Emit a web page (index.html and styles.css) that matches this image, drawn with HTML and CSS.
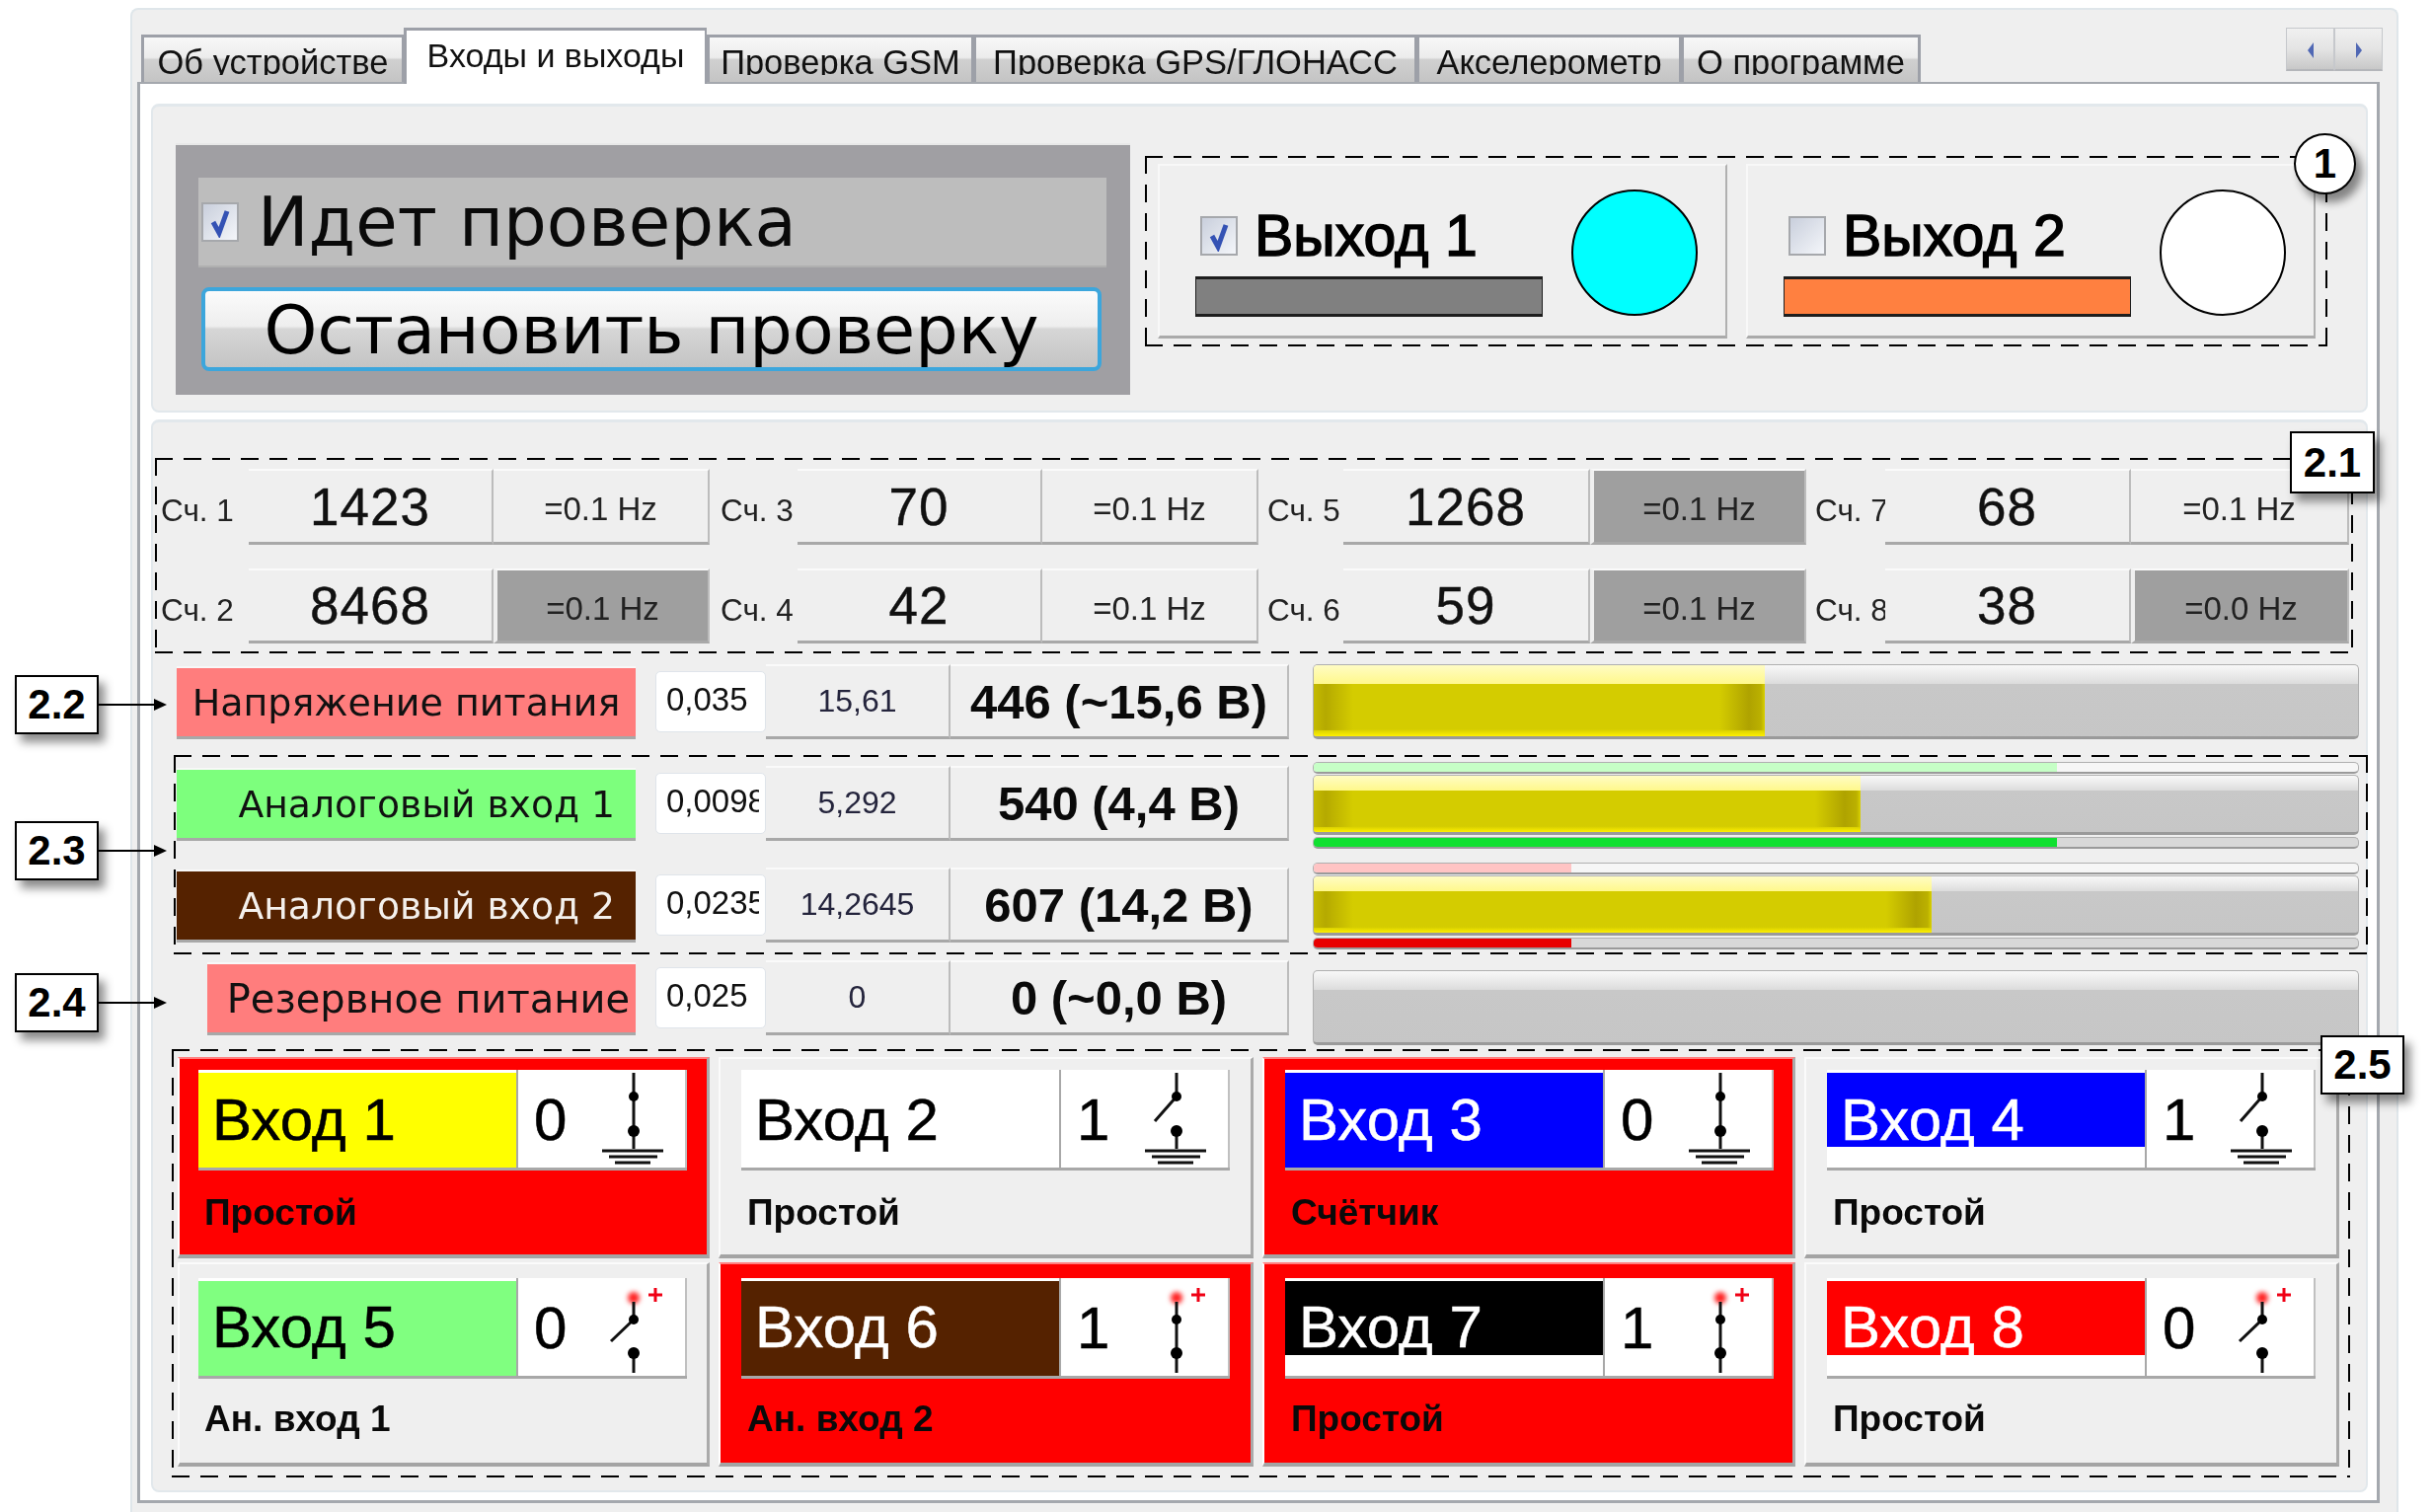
FILE: index.html
```html
<!DOCTYPE html>
<html lang="ru">
<head>
<meta charset="utf-8">
<title>Входы и выходы</title>
<link rel="stylesheet" href="styles.css">
</head>
<body>
<div class="window">
  <div class="tabs">
    <div class="tab t1"><span>Об устройстве</span></div>
    <div class="tab active t2"><span>Входы и выходы</span></div>
    <div class="tab t3"><span>Проверка GSM</span></div>
    <div class="tab t4"><span>Проверка GPS/ГЛОНАСС</span></div>
    <div class="tab t5"><span>Акселерометр</span></div>
    <div class="tab t6"><span>О программе</span></div>
    <div class="scroll">
      <div class="sbtn"><svg width="8" height="16" viewBox="0 0 8 16"><path d="M7 0V16L1 8Z" fill="#5068b4"/></svg></div>
      <div class="sbtn"><svg width="8" height="16" viewBox="0 0 8 16"><path d="M1 0V16L7 8Z" fill="#5068b4"/></svg></div>
    </div>
  </div>
  <div class="pane">
    <section class="panel top">
      <div class="status">
        <div class="status-label">
          <span class="check"><svg width="26" height="32" viewBox="0 0 26 32"><path d="M6 16L12 27L20 5" fill="none" stroke="#3452b4" stroke-width="5"/></svg></span>
          <span class="status-text">Идет проверка</span>
        </div>
        <button class="stop">Остановить проверку</button>
      </div>
      <div class="out first">
        <div class="out-left">
          <div class="out-row">
            <span class="check"><svg width="26" height="32" viewBox="0 0 26 32"><path d="M6 16L12 27L20 5" fill="none" stroke="#3452b4" stroke-width="5"/></svg></span>
            <span class="out-text">Выход 1</span>
          </div>
          <div class="out-bar gray"></div>
        </div>
        <div class="lamp cyan"></div>
      </div>
      <div class="out">
        <div class="out-left">
          <div class="out-row">
            <span class="check"></span>
            <span class="out-text">Выход 2</span>
          </div>
          <div class="out-bar orange"></div>
        </div>
        <div class="lamp white"></div>
      </div>
    </section>

    <section class="panel main">
      <div class="counters">
        <div class="cl">Сч. 1</div><div class="cb num">1423</div><div class="cb hz">=0.1 Hz</div>
        <div class="cl g2">Сч. 3</div><div class="cb num">70</div><div class="cb hz">=0.1 Hz</div>
        <div class="cl g3">Сч. 5</div><div class="cb num">1268</div><div class="cb hz on">=0.1 Hz</div>
        <div class="cl g3">Сч. 7</div><div class="cb num">68</div><div class="cb hz">=0.1 Hz</div>
        <div class="cl">Сч. 2</div><div class="cb num">8468</div><div class="cb hz on">=0.1 Hz</div>
        <div class="cl g2">Сч. 4</div><div class="cb num">42</div><div class="cb hz">=0.1 Hz</div>
        <div class="cl g3">Сч. 6</div><div class="cb num">59</div><div class="cb hz on">=0.1 Hz</div>
        <div class="cl g3">Сч. 8</div><div class="cb num">38</div><div class="cb hz on">=0.0 Hz</div>
      </div>

      <div class="arow r22">
        <div class="cells">
          <div class="alabel salmon center">Напряжение питания</div>
          <div class="ainput"><span>0,035</span></div>
          <div class="aval">15,61</div>
          <div class="abig">446 (~15,6 В)</div>
        </div>
        <div class="bars">
          <div class="track big"><div class="fill" style="width:457px"></div></div>
        </div>
      </div>

      <div class="arow r23a">
        <div class="cells">
          <div class="alabel green">Аналоговый вход 1</div>
          <div class="ainput"><span>0,0098</span></div>
          <div class="aval">5,292</div>
          <div class="abig">540 (4,4 В)</div>
        </div>
        <div class="bars">
          <div class="track thin light"><div class="tfill lgreen" style="width:753px"></div></div>
          <div class="track mid"><div class="fill" style="width:554px"></div></div>
          <div class="track thin dark"><div class="tfill dgreen" style="width:753px"></div></div>
        </div>
      </div>

      <div class="arow r23b">
        <div class="cells">
          <div class="alabel brown">Аналоговый вход 2</div>
          <div class="ainput"><span>0,0235</span></div>
          <div class="aval">14,2645</div>
          <div class="abig">607 (14,2 В)</div>
        </div>
        <div class="bars">
          <div class="track thin light"><div class="tfill lred" style="width:261px"></div></div>
          <div class="track mid"><div class="fill" style="width:626px"></div></div>
          <div class="track thin dark"><div class="tfill dred" style="width:261px"></div></div>
        </div>
      </div>

      <div class="arow r24">
        <div class="cells">
          <div class="alabel salmon short">Резервное питание</div>
          <div class="ainput"><span>0,025</span></div>
          <div class="aval">0</div>
          <div class="abig">0 (~0,0 В)</div>
        </div>
        <div class="bars">
          <div class="track big"></div>
        </div>
      </div>

      <div class="cards">
        <div class="card col1 red">
          <div class="io"><div class="name"><div class="nf full c-yellow">Вход 1</div></div>
            <div class="state"><span class="digit">0</span>
              <svg class="sw" width="110" height="98" viewBox="0 0 110 98"><path d="M56 3V80" class="w"/><circle cx="56" cy="27" r="5"/><circle cx="56" cy="62" r="6"/><path d="M24 82H86M31 88H80M37 94H73" class="g"/></svg>
            </div></div>
          <div class="kind">Простой</div>
        </div>
        <div class="card">
          <div class="io"><div class="name"><div class="nf full c-white">Вход 2</div></div>
            <div class="state"><span class="digit">1</span>
              <svg class="sw" width="110" height="98" viewBox="0 0 110 98"><path d="M56 3V27M56 27L34 52M56 62V80" class="w"/><circle cx="56" cy="27" r="5"/><circle cx="56" cy="62" r="6"/><path d="M24 82H86M31 88H80M37 94H73" class="g"/></svg>
            </div></div>
          <div class="kind">Простой</div>
        </div>
        <div class="card red">
          <div class="io"><div class="name"><div class="nf full c-blue">Вход 3</div></div>
            <div class="state"><span class="digit">0</span>
              <svg class="sw" width="110" height="98" viewBox="0 0 110 98"><path d="M56 3V80" class="w"/><circle cx="56" cy="27" r="5"/><circle cx="56" cy="62" r="6"/><path d="M24 82H86M31 88H80M37 94H73" class="g"/></svg>
            </div></div>
          <div class="kind">Счётчик</div>
        </div>
        <div class="card">
          <div class="io"><div class="name"><div class="nf part c-blue">Вход 4</div></div>
            <div class="state"><span class="digit">1</span>
              <svg class="sw" width="110" height="98" viewBox="0 0 110 98"><path d="M56 3V27M56 27L34 52M56 62V80" class="w"/><circle cx="56" cy="27" r="5"/><circle cx="56" cy="62" r="6"/><path d="M24 82H86M31 88H80M37 94H73" class="g"/></svg>
            </div></div>
          <div class="kind">Простой</div>
        </div>
        <div class="card col1 lower">
          <div class="io"><div class="name"><div class="nf full c-green">Вход 5</div></div>
            <div class="state"><span class="digit">0</span>
              <svg class="sw" width="110" height="98" viewBox="0 0 110 98"><circle cx="56" cy="20" r="6" class="gc"/><path d="M78 10V24M71 17H85" class="p"/><path d="M56 24V42M56 42L33 64M56 76V96" class="w"/><circle cx="56" cy="42" r="5"/><circle cx="56" cy="76" r="6"/></svg>
            </div></div>
          <div class="kind">Ан. вход 1</div>
        </div>
        <div class="card red lower">
          <div class="io"><div class="name"><div class="nf full c-brown">Вход 6</div></div>
            <div class="state"><span class="digit">1</span>
              <svg class="sw" width="110" height="98" viewBox="0 0 110 98"><circle cx="56" cy="20" r="6" class="gc"/><path d="M78 10V24M71 17H85" class="p"/><path d="M56 24V96" class="w"/><circle cx="56" cy="42" r="5"/><circle cx="56" cy="76" r="6"/></svg>
            </div></div>
          <div class="kind">Ан. вход 2</div>
        </div>
        <div class="card red lower">
          <div class="io"><div class="name"><div class="nf part c-black">Вход 7</div></div>
            <div class="state"><span class="digit">1</span>
              <svg class="sw" width="110" height="98" viewBox="0 0 110 98"><circle cx="56" cy="20" r="6" class="gc"/><path d="M78 10V24M71 17H85" class="p"/><path d="M56 24V96" class="w"/><circle cx="56" cy="42" r="5"/><circle cx="56" cy="76" r="6"/></svg>
            </div></div>
          <div class="kind">Простой</div>
        </div>
        <div class="card lower">
          <div class="io"><div class="name"><div class="nf part c-red">Вход 8</div></div>
            <div class="state"><span class="digit">0</span>
              <svg class="sw" width="110" height="98" viewBox="0 0 110 98"><circle cx="56" cy="20" r="6" class="gc"/><path d="M78 10V24M71 17H85" class="p"/><path d="M56 24V42M56 42L33 64M56 76V96" class="w"/><circle cx="56" cy="42" r="5"/><circle cx="56" cy="76" r="6"/></svg>
            </div></div>
          <div class="kind">Простой</div>
        </div>
      </div>
    </section>
  </div>
</div>

<div class="dash d1"></div>
<div class="dash d21"></div>
<div class="dash d23"></div>
<div class="dash d25"></div>

<div class="round">1</div>
<div class="tag t21">2.1</div>
<div class="tag t25">2.5</div>
<div class="callout c22"><div class="tag-in">2.2</div><svg width="70" height="14" viewBox="0 0 70 14"><path d="M0 7H58" stroke="#000" stroke-width="2"/><path d="M56 1L69 7L56 13Z"/></svg></div>
<div class="callout c23"><div class="tag-in">2.3</div><svg width="70" height="14" viewBox="0 0 70 14"><path d="M0 7H58" stroke="#000" stroke-width="2"/><path d="M56 1L69 7L56 13Z"/></svg></div>
<div class="callout c24"><div class="tag-in">2.4</div><svg width="70" height="14" viewBox="0 0 70 14"><path d="M0 7H58" stroke="#000" stroke-width="2"/><path d="M56 1L69 7L56 13Z"/></svg></div>
</body>
</html>
```
FILE: styles.css
```css
* { box-sizing: border-box; }
html, body { margin: 0; padding: 0; }
body {
  position: relative;
  width: 2466px;
  height: 1532px;
  overflow: hidden;
  background: #fff;
  font-family: "Liberation Sans", Arial, sans-serif;
  color: #000;
}

/* window frame */
.window {
  margin: 8px 0 0 132px;
  width: 2298px;
  height: 1524px;
  background: #efefef;
  border: 2px solid #dfe6ea;
  border-bottom: 0;
  border-radius: 8px 8px 0 0;
  filter: blur(0.6px);
}

/* tabs */
.tabs {
  display: flex;
  align-items: flex-end;
  height: 55px;
  margin-top: 18px;
  padding-left: 9px;
}
.tab {
  height: 48px;
  padding-top: 7px;
  border: 3px solid #9da0a8;
  border-bottom: 0;
  border-right-width: 2px;
  background: linear-gradient(180deg, #f8f8f8, #ececec 45%, #d0d0d0 50%, #c4c4c4);
  text-align: center;
  font-size: 34.5px;
  line-height: 36px;
  white-space: nowrap;
  overflow: hidden;
  color: #111;
}
.tab span {
  display: block;
  height: 31px;
  overflow: hidden;
}
.t1 { width: 266px; }
.t2 { width: 307px; }
.t3 { width: 270px; }
.t4 { width: 449px; }
.t5 { width: 268px; }
.t6 { width: 243px; border-right-width: 3px; }
.tab.active {
  height: 57px;
  margin-bottom: -2px;
  padding-top: 8px;
  background: #fff;
  font-size: 34px;
  line-height: 34px;
  position: relative;
  border-bottom: 0;
}
.tab.active span { height: 38px; }
.scroll {
  display: flex;
  margin-left: auto;
  margin-right: 14px;
  margin-bottom: 11px;
}
.sbtn {
  width: 49px;
  height: 44px;
  display: flex;
  justify-content: center;
  padding-top: 14px;
  border: 1px solid #c6c8cc;
  border-bottom: 2px solid #b4b6ba;
  background: linear-gradient(180deg, #f0f0f0, #e4e4e4 50%, #c8c8c8);
}

/* tab pane */
.pane {
  margin-left: 5px;
  width: 2272px;
  height: 1440px;
  padding: 20px 11px 0;
  background: #fff;
  border: 2px solid #a4a8ae;
  border-width: 2px 3px 3px 3px;
}
.panel {
  width: 2246px;
  background: #efefef;
  border: 2px solid #e2e8ec;
  border-top-width: 3px;
  border-radius: 8px;
}
.panel.top {
  display: flex;
  align-items: flex-start;
  height: 313px;
}
.panel.main {
  height: 1087px;
  margin-top: 7px;
}

/* status block */
.status {
  width: 967px;
  height: 255px;
  margin: 37px 0 0 23px;
  padding: 33px 0 0 23px;
  background: #a09fa3;
  border-top: 2px solid #e8e8e8;
}
.status-label {
  width: 920px;
  height: 91px;
  display: flex;
  align-items: center;
  background: #bdbdbd;
  padding-left: 3px;
  border-bottom: 2px solid #b0b0b0;
}
.status-text {
  margin-left: 19px;
  font-family: "DejaVu Sans", sans-serif;
  font-size: 69px;
  line-height: 80px;
  color: #0a0a0a;
}
.stop {
  display: block;
  width: 912px;
  height: 85px;
  margin: 20px 0 0 3px;
  padding: 0;
  border: 4px solid #3ca6dc;
  border-radius: 8px;
  background: linear-gradient(180deg, #fbfbfb, #eeeeee 46%, #d6d6d6 50%, #c4c4c4);
  font-family: "DejaVu Sans", sans-serif;
  font-size: 68.5px;
  line-height: 70px;
  color: #000;
}
.check {
  flex: none;
  width: 38px;
  height: 40px;
  display: flex;
  justify-content: center;
  align-items: center;
  border: 2px solid #a6a8ac;
  background: linear-gradient(135deg, #c9cfdc, #f4f6fa);
}

/* outputs */
.out {
  display: flex;
  width: 577px;
  height: 177px;
  margin: 58px 0 0 19px;
  padding: 24px 0 0 36px;
  background: #efefef;
  border-top: 2px solid #f8f8f8;
  border-left: 2px solid #f8f8f8;
  border-right: 2px solid #b0b0b0;
  border-bottom: 3px solid #aaa;
}
.out.first { margin-left: 28px; }
.out-left { width: 352px; padding-top: 26px; }
.out-row {
  display: flex;
  align-items: center;
  height: 62px;
  padding-left: 5px;
  padding-bottom: 20px;
}
.out-text {
  margin-left: 17px;
  font-size: 59px;
  line-height: 60px;
  white-space: nowrap;
  -webkit-text-stroke: 1.5px #000;
}
.out-bar {
  width: 352px;
  height: 41px;
  border: 3px solid #1e1e1e;
  border-width: 3px 1px 3px 1px;
}
.gray { background: #808080; }
.orange { background: #ff8040; }
.lamp {
  width: 128px;
  height: 128px;
  margin-left: 29px;
  border: 2px solid #000;
  border-radius: 50%;
}
.cyan { background: #00ffff; }
.white { background: #fff; }

/* counters */
.counters {
  display: grid;
  grid-template-columns: 89px 248px 219px 89px 248px 219px 86px 250px 219px 80px 249px 221px;
  grid-template-rows: 77px 76px;
  row-gap: 24px;
  margin: 47px 0 0 8px;
}
.cl {
  display: flex;
  align-items: center;
  padding-top: 8px;
  font-size: 31.5px;
  white-space: nowrap;
  overflow: hidden;
  color: #222;
}
.g2 { padding-left: 11px; }
.g3 { padding-left: 9px; }
.cb {
  display: flex;
  align-items: center;
  justify-content: center;
  background: #efefef;
  border-top: 2px solid #fafafa;
  border-right: 2px solid #bcbcbc;
  border-bottom: 3px solid #a8a8a8;
  white-space: nowrap;
}
.num { font-size: 53px; letter-spacing: 1px; color: #111; -webkit-text-stroke: .4px #111; }
.hz { font-size: 33px; padding-top: 6px; color: #222; }
.hz.on { background: #9f9f9f; border-left: 4px solid #efefef; }

/* analogue rows */
.arow { display: flex; align-items: flex-start; margin-left: 24px; }
.r22 { margin-top: 21px; height: 76px; }
.r23a { margin-top: 23px; height: 87px; }
.r23b { margin-top: 15px; height: 88px; }
.r24 { margin-top: 11px; height: 85px; }
.cells {
  display: flex;
  align-items: flex-start;
  width: 1127px;
  height: 76px;
}
.r23a .cells { margin-top: 4px; }
.r23b .cells { margin-top: 5px; }
.alabel {
  width: 465px;
  height: 74px;
  margin-top: 2px;
  padding-right: 21px;
  display: flex;
  align-items: center;
  justify-content: flex-end;
  font-family: "DejaVu Sans", sans-serif;
  font-size: 37.7px;
  white-space: nowrap;
  border-top: 2px solid #f8f8f8;
  border-bottom: 3px solid #a8a8a8;
}
.alabel.center { justify-content: center; padding-right: 0; font-size: 38px; }
.alabel.short { width: 434px; margin-left: 31px; padding-right: 6px; font-size: 40px; }
.salmon { background: #ff7d7d; color: #111; }
.green { background: #7dff7d; color: #111; }
.brown { background: #552200; color: #f4f0ec; }
.ainput {
  flex: none;
  width: 112px;
  height: 62px;
  margin: 7px 0 0 20px;
  padding: 0 0 4px 10px;
  display: flex;
  align-items: center;
  background: #fff;
  border: 1px solid #dfe4ea;
  border-radius: 5px;
  font-size: 33px;
  color: #111;
}
.ainput span {
  display: block;
  width: 94px;
  overflow: hidden;
  white-space: nowrap;
}
.aval, .abig {
  display: flex;
  align-items: center;
  justify-content: center;
  height: 76px;
  background: #efefef;
  border-top: 2px solid #fafafa;
  border-right: 2px solid #bcbcbc;
  border-bottom: 3px solid #a8a8a8;
  white-space: nowrap;
}
.aval { width: 187px; font-size: 32px; color: #24243c; }
.abig { width: 343px; font-size: 49px; font-weight: 700; color: #0a0a0a; }

/* bars */
.bars {
  display: flex;
  flex-direction: column;
  gap: 1px;
  width: 1060px;
  margin-left: 24px;
}
.track {
  position: relative;
  overflow: hidden;
  border: 1px solid #b0b0b0;
  border-bottom: 3px solid #9a9a9a;
  border-radius: 5px;
  background: linear-gradient(180deg, #f8f8f8, #ececec 12%, #dcdcdc 26%, #c8c8c8 27%, #c6c6c6);
}
.track.big { height: 76px; }
.r24 .bars { margin-top: 10px; }
.track.mid { height: 61px; }
.track.thin { height: 12px; border-bottom-width: 2px; }
.track.light { background: #f6f6f6; }
.track.dark { background: #d8d8d8; margin-top: 1px; }
.fill {
  position: relative;
  height: 100%;
  background: linear-gradient(180deg, #fffcc4, #fff88c 26%, #d4cc00 27%, #d4cc00 90%, #fff000);
}
.fill::after {
  content: "";
  position: absolute;
  left: 0;
  right: 0;
  top: 27%;
  bottom: 8%;
  background: linear-gradient(90deg, rgba(150,135,0,.25), rgba(150,135,0,.5) 12px, rgba(150,135,0,0) 40px, rgba(150,135,0,0) calc(100% - 46px), rgba(150,135,0,.6) calc(100% - 16px), rgba(150,135,0,.4) calc(100% - 4px), rgba(230,220,0,.3));
}
.tfill { height: 100%; }
.lgreen { background: #c6ffc6; }
.dgreen { background: #10e030; }
.lred { background: #ffc4c4; }
.dred { background: #e80000; }

/* input cards */
.cards {
  display: grid;
  grid-template-columns: 539px 542px 540px 542px;
  grid-template-rows: 204px 207px;
  column-gap: 9px;
  row-gap: 4px;
  margin: 13px 0 0 25px;
}
.card {
  padding: 11px 0 0 21px;
  background: #efefef;
  border-top: 2px solid #fbfbfb;
  border-left: 2px solid #fbfbfb;
  border-right: 3px solid #aaa;
  border-bottom: 4px solid #a4a4a4;
}
.card.col1 { padding-left: 19px; }
.card.lower { padding-top: 14px; }
.card.red { background: #ff0000; border-top-color: #ff8080; border-left-color: #fff; }
.io {
  display: flex;
  width: 495px;
  height: 102px;
  background: #fff;
  border-bottom: 3px solid #a8a8a8;
}
.name { width: 322px; padding-top: 3px; }
.nf {
  padding-left: 14px;
  font-size: 60px;
  line-height: 72px;
  white-space: nowrap;
  -webkit-text-stroke: .5px currentColor;
}
.full { height: 96px; padding-top: 12px; }
.part { height: 75px; padding-top: 12px; }
.lower .nf { padding-top: 11px; }
.c-yellow { background: #ffff00; color: #000; }
.c-white { background: #fff; color: #000; }
.c-blue { background: #0000ff; color: #fff; }
.c-green { background: #80ff80; color: #000; }
.c-brown { background: #552200; color: #fff; }
.c-black { background: #000; color: #fff; }
.c-red { background: #ff0000; color: #fff; }
.state {
  position: relative;
  display: flex;
  width: 173px;
  border-left: 2px solid #a8a8a8;
  border-right: 2px solid #c0c0c0;
}
.digit {
  margin: 15px 0 0 16px;
  font-size: 60px;
  line-height: 72px;
  -webkit-text-stroke: .5px #000;
}
.sw { margin-left: auto; margin-right: -2px; flex: none; }
.sw .w { fill: none; stroke: #111; stroke-width: 3; }
.sw .g { fill: none; stroke: #111; stroke-width: 3; }
.sw .p { fill: none; stroke: #f00014; stroke-width: 3; }
.sw .gc { fill: #ff2020; filter: blur(2.5px); }
.kind {
  margin: 18px 0 0 6px;
  font-size: 37px;
  line-height: 50px;
  font-weight: 700;
  white-space: nowrap;
  color: #0a0a0a;
}
.lower .kind { margin-top: 16px; }

/* annotation overlay */
.dash {
  position: absolute;
  background-image:
    repeating-linear-gradient(90deg, #000 0 18px, transparent 18px 29px),
    repeating-linear-gradient(90deg, #000 0 18px, transparent 18px 29px),
    repeating-linear-gradient(180deg, #000 0 18px, transparent 18px 29px),
    repeating-linear-gradient(180deg, #000 0 18px, transparent 18px 29px);
  background-size: 100% 2px, 100% 2px, 2px 100%, 2px 100%;
  background-position: 0 0, 0 100%, 0 0, 100% 0;
  background-repeat: no-repeat;
  pointer-events: none;
}
.d1 { left: 1160px; top: 158px; width: 1198px; height: 193px; }
.d21 { left: 157px; top: 464px; width: 2227px; height: 198px; }
.d23 { left: 176px; top: 765px; width: 2223px; height: 202px; }
.d25 { left: 174px; top: 1063px; width: 2207px; height: 434px; }

.tag, .tag-in, .round {
  display: flex;
  align-items: center;
  justify-content: center;
  background: #fff;
  border: 2px solid #000;
  font-weight: 700;
  font-size: 42px;
  box-shadow: 6px 8px 9px rgba(0,0,0,.45);
}
.tag { position: absolute; }
.t21 { left: 2320px; top: 437px; width: 86px; height: 63px; }
.t25 { left: 2351px; top: 1049px; width: 85px; height: 60px; }
.round {
  position: absolute;
  left: 2324px;
  top: 135px;
  width: 63px;
  height: 62px;
  border-radius: 50%;
}
.callout {
  position: absolute;
  left: 15px;
  display: flex;
  align-items: center;
}
.tag-in { width: 85px; height: 60px; }
.c22 { top: 684px; }
.c23 { top: 832px; }
.c24 { top: 986px; }
```
